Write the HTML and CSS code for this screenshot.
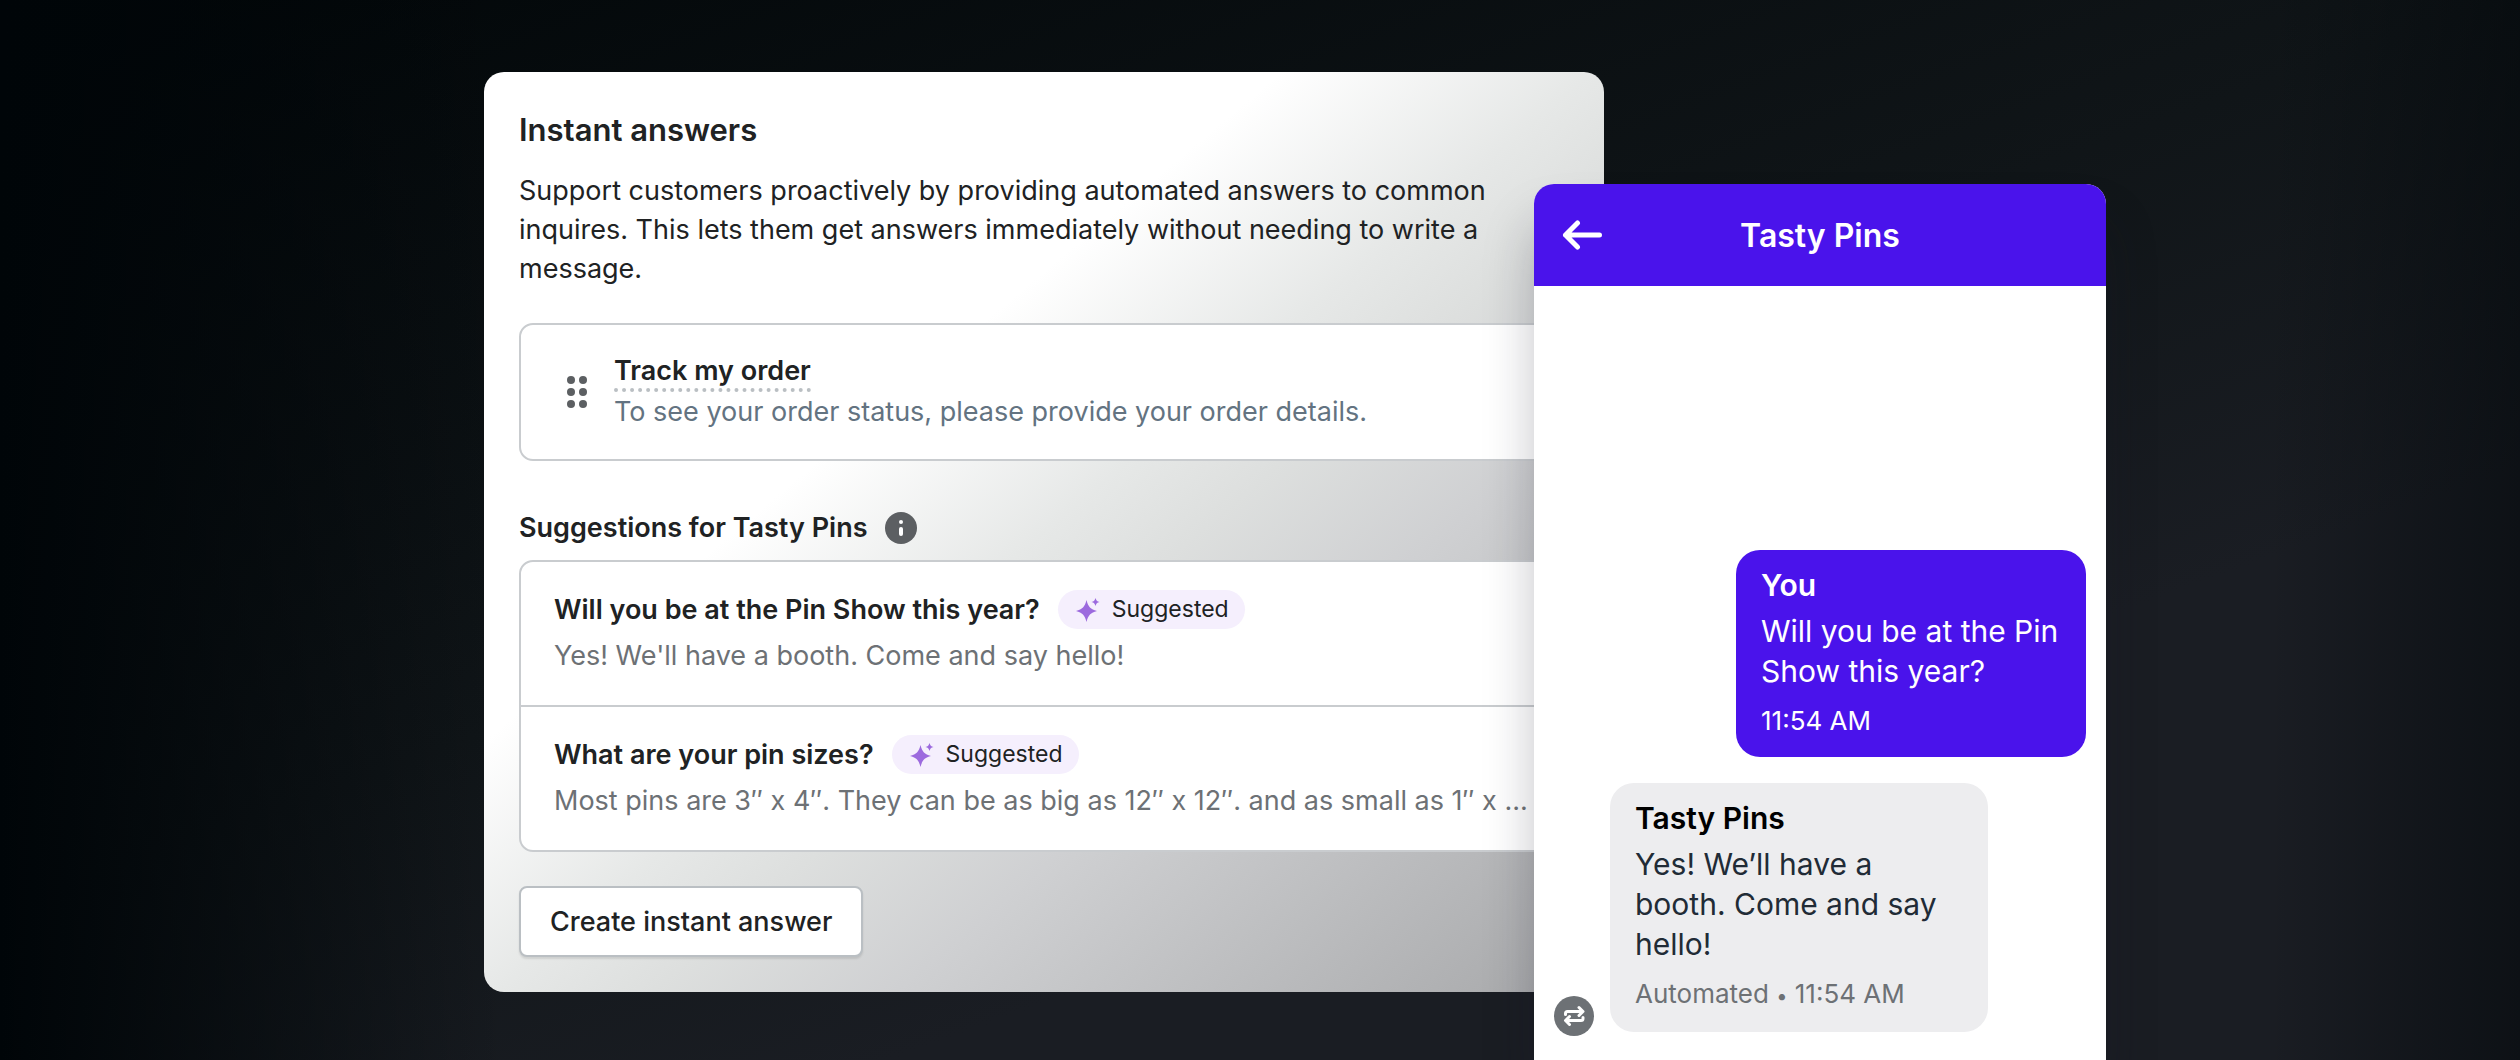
FILE: index.html
```html
<!DOCTYPE html>
<html lang="en">
<head>
  <meta charset="utf-8">
  <meta name="viewport" content="width=device-width, initial-scale=1">
  <title>Instant answers</title>
  <link rel="stylesheet" href="styles.css">
</head>
<body>
  <main class="stage">
    <section class="panel">
      <h1>Instant answers</h1>
      <p class="intro">Support customers proactively by providing automated answers to common inquires. This lets them get answers immediately without needing to write a message.</p>

      <div class="card track">
        <svg class="drag" viewBox="0 0 20 32" aria-hidden="true">
          <circle cx="4" cy="4" r="4"/><circle cx="16" cy="4" r="4"/>
          <circle cx="4" cy="16" r="4"/><circle cx="16" cy="16" r="4"/>
          <circle cx="4" cy="28" r="4"/><circle cx="16" cy="28" r="4"/>
        </svg>
        <div>
          <h3 class="track-title">Track my order</h3>
          <p class="track-text">To see your order status, please provide your order details.</p>
        </div>
      </div>

      <div class="heading">
        <h2>Suggestions for Tasty Pins</h2>
        <svg class="info" viewBox="0 0 32 32" aria-hidden="true">
          <circle cx="16" cy="16" r="16" fill="#5c5f62"/>
          <circle cx="16" cy="10" r="2" fill="#fff"/>
          <rect x="14" y="15" width="4" height="9" rx="2" fill="#fff"/>
        </svg>
      </div>

      <div class="card">
        <div class="row">
          <div class="question">
            <h3>Will you be at the Pin Show this year?</h3>
            <span class="badge">
              <svg viewBox="0 0 24 24" aria-hidden="true">
                <path d="M10.500 2C12.300 9 14.500 11.200 21 13C14.500 14.800 12.300 17 10.500 24C8.700 17 6.500 14.800 0 13C6.500 11.200 8.700 9 10.500 2Z"/>
                <path d="M19.500 0C20.200 2.600 21 3.300 23.500 4C21 4.700 20.200 5.400 19.500 8C18.800 5.400 18 4.700 15.500 4C18 3.300 18.800 2.600 19.500 0Z"/>
              </svg>
              Suggested
            </span>
          </div>
          <p>Yes! We'll have a booth. Come and say hello!</p>
        </div>
        <div class="row">
          <div class="question">
            <h3>What are your pin sizes?</h3>
            <span class="badge">
              <svg viewBox="0 0 24 24" aria-hidden="true">
                <path d="M10.500 2C12.300 9 14.500 11.200 21 13C14.500 14.800 12.300 17 10.500 24C8.700 17 6.500 14.800 0 13C6.500 11.200 8.700 9 10.500 2Z"/>
                <path d="M19.500 0C20.200 2.600 21 3.300 23.500 4C21 4.700 20.200 5.400 19.500 8C18.800 5.400 18 4.700 15.500 4C18 3.300 18.800 2.600 19.500 0Z"/>
              </svg>
              Suggested
            </span>
          </div>
          <p>Most pins are 3″ x 4″. They can be as big as 12″ x 12″. and as small as 1″ x ...</p>
        </div>
      </div>

      <button class="create" type="button">Create instant answer</button>
    </section>

    <section class="chat">
      <header class="chat-header">
        <button class="back" type="button" aria-label="Back">
          <svg viewBox="0 0 40 30" aria-hidden="true">
            <path d="M37.500 15H3.500M15.500 3L3.500 15L15.500 27"/>
          </svg>
        </button>
        <h2>Tasty Pins</h2>
      </header>
      <div class="messages">
        <div class="bubble mine">
          <h3>You</h3>
          <p>Will you be at the Pin Show this year?</p>
          <small>11:54 AM</small>
        </div>
        <div class="reply">
          <svg class="auto" viewBox="0 0 40 40" aria-hidden="true">
            <circle cx="20" cy="20" r="20" fill="#6d7175" stroke="none"/>
            <path d="M11.500 18.500V17.500Q11.500 15.500 13.500 15.500H28.500M25 11.500L29 15.500L25 19.500M29 21.500V22.500Q29 24.500 27 24.500H12M15.500 20.500L11.500 24.500L15.500 28.500"/>
          </svg>
          <div class="bubble theirs">
            <h3>Tasty Pins</h3>
            <p>Yes! We’ll have a booth. Come and say hello!</p>
            <small>Automated <span class="dot">•</span> 11:54 AM</small>
          </div>
        </div>
      </div>
    </section>
  </main>
</body>
</html>
```
FILE: styles.css
```css
* {
  box-sizing: border-box;
}

body {
  margin: 0;
  min-height: 100vh;
  overflow: hidden;
  font-family: Inter, "Liberation Sans", sans-serif;
  font-size: 27px;
  line-height: 39px;
  color: #202223;
  background:
    linear-gradient(90deg, #000508 0%, rgba(0, 5, 8, 0) 20%, rgba(0, 5, 8, 0) 90%, rgba(0, 5, 8, 0.5) 100%),
    linear-gradient(160deg, #010608 0%, #101518 46%, #1a1d23 70%);
}

h1, h2, h3, p {
  margin: 0;
  font-size: 27px;
}

h1, h2, h3 {
  font-weight: 600;
}

.stage {
  display: flex;
  justify-content: center;
  align-items: flex-start;
  height: 100vh;
  padding-top: 72px;
  padding-left: 70px;
}

.panel {
  flex: 0 0 1120px;
  margin-right: -70px;
  padding: 38px 35px 35px;
  border-radius: 20px;
  background: linear-gradient(140deg, #fff 0%, #fff 36%, #e6e8e7 50%, #dddfde 57%, #cfd0d2 68%, #a6a7a9 100%);
}

h1 {
  font-size: 31px;
}

.intro {
  margin-top: 22px;
  padding-right: 80px;
}

.card {
  border: 2px solid #c9cccf;
  border-radius: 14px;
  background: #fff;
}

.track {
  display: flex;
  align-items: center;
  gap: 27px;
  margin-top: 35px;
  padding: 28px 46px;
}

.drag {
  width: 20px;
  height: 32px;
  fill: #5c5f62;
}

.track-title {
  width: max-content;
  line-height: 35px;
  border-bottom: 4px dotted #babfc3;
}

.track-text {
  color: #637381;
}

.heading {
  display: flex;
  align-items: center;
  gap: 18px;
  margin: 47px 0 13px;
}

.info {
  width: 32px;
  height: 32px;
}

.row {
  padding: 28px 33px 30px;
}

.row + .row {
  border-top: 2px solid #c9cccf;
}

.question {
  display: flex;
  align-items: center;
  gap: 18px;
  margin-bottom: 7px;
}

.row p {
  color: #6d7175;
}

.badge {
  display: flex;
  align-items: center;
  gap: 12px;
  padding: 0 16px 0 18px;
  border-radius: 20px;
  font-size: 23px;
  background: #f5effd;
}

.badge svg {
  width: 24px;
  height: 24px;
  fill: #9c6ade;
}

.create {
  margin-top: 34px;
  padding: 14px 29px;
  border: 2px solid #babfc3;
  border-radius: 8px;
  font: 500 27px/39px Inter, "Liberation Sans", sans-serif;
  color: #202223;
  background: #fff;
  box-shadow: 0 2px 2px rgba(0, 0, 0, 0.1);
}

.chat {
  position: relative;
  flex: 0 0 572px;
  align-self: stretch;
  margin-top: 112px;
  border-radius: 20px 20px 0 0;
  background: #fff;
  box-shadow: 0 40px 50px rgba(23, 24, 40, 0.25);
}

.chat-header {
  display: grid;
  grid-template-columns: 40px 1fr 40px;
  align-items: center;
  height: 102px;
  padding: 0 28px;
  border-radius: 20px 20px 0 0;
  color: #fff;
  background: #4a13eb;
}

.chat-header h2 {
  font-size: 32px;
  text-align: center;
}

.back {
  padding: 0;
  border: 0;
  background: none;
}

.back svg {
  display: block;
  width: 40px;
  height: 30px;
  fill: none;
  stroke: #fff;
  stroke-width: 5;
  stroke-linecap: round;
  stroke-linejoin: round;
}

.messages {
  display: flex;
  flex-direction: column;
  gap: 26px;
  padding: 264px 20px 24px;
}

.bubble {
  padding: 15px 25px 16px;
  border-radius: 24px;
  line-height: 40px;
}

.bubble h3,
.bubble p {
  font-size: 30px;
}

.bubble h3 {
  margin-bottom: 6px;
}

.bubble small {
  display: block;
  margin-top: 10px;
  font-size: 26px;
}

.dot {
  font-size: 20px;
}

.mine {
  align-self: flex-end;
  width: 350px;
  color: #fff;
  background: #4a13eb;
}

.reply {
  display: flex;
  align-items: flex-end;
  gap: 16px;
}

.auto {
  width: 40px;
  height: 40px;
  margin-bottom: -4px;
  fill: none;
  stroke: #fff;
  stroke-width: 3;
  stroke-linecap: round;
  stroke-linejoin: round;
}

.theirs {
  width: 378px;
  color: #212b36;
  background: #ededef;
}

.theirs h3 {
  color: #000;
}

.theirs small {
  color: #6d7175;
}
```
